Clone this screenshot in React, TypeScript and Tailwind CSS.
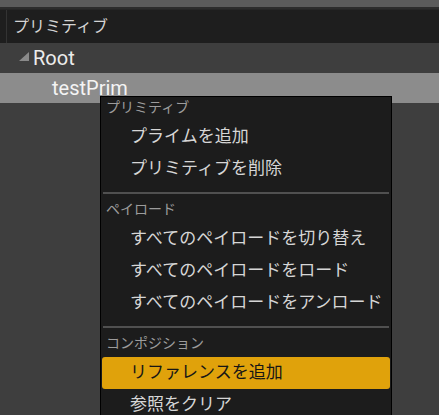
import * as React from "react"

const font = { fontFamily: '"Roboto", "Noto Sans CJK JP", sans-serif' }

type Entry =
  | { kind: "header"; label: string }
  | { kind: "item"; label: string; active?: boolean }
  | { kind: "sep" }

const entries: Entry[] = [
  { kind: "header", label: "プリミティブ" },
  { kind: "item", label: "プライムを追加" },
  { kind: "item", label: "プリミティブを削除" },
  { kind: "sep" },
  { kind: "header", label: "ペイロード" },
  { kind: "item", label: "すべてのペイロードを切り替え" },
  { kind: "item", label: "すべてのペイロードをロード" },
  { kind: "item", label: "すべてのペイロードをアンロード" },
  { kind: "sep" },
  { kind: "header", label: "コンポジション" },
  { kind: "item", label: "リファレンスを追加", active: true },
  { kind: "item", label: "参照をクリア" },
]

function MenuEntry({ entry }: { entry: Entry }) {
  if (entry.kind === "sep") {
    return (
      <div className="h-[16px] flex items-center px-[1px]">
        <div className="h-[2px] w-full bg-[#505050]" />
      </div>
    )
  }
  if (entry.kind === "header") {
    return (
      <div className="h-[22px] pl-[4px] text-[14px] leading-[16px] text-[#9c9c9c]">
        {entry.label}
      </div>
    )
  }
  return (
    <div
      className={
        entry.active
          ? "h-[32px] flex items-center pl-[28px] text-[17px] rounded-[3px] bg-[#e0a20b] text-[#161616]"
          : "h-[32px] flex items-center pl-[28px] text-[17px] text-[#d6d6d6]"
      }
    >
      {entry.label}
    </div>
  )
}

export default function App() {
  return (
    <div className="relative w-[439px] h-[415px] overflow-hidden bg-[#3e3e3e]" style={font}>
      <div className="h-[7px] bg-[#5b5b5b]" />
      <div className="h-[2px] bg-[#2c2c2c]" />
      <div className="h-[34px] flex bg-[#1e1e1e] border-t border-[#262626]">
        <div className="w-[7px] border-r border-[#333333]" />
        <div className="pl-[6px] flex items-center text-[16px] text-[#d4d4d4]">プリミティブ</div>
      </div>
      <div className="h-[30px] flex items-center">
        <svg width="10" height="9" viewBox="0 0 10 9" className="ml-[19px] mt-[-4px]">
          <polygon points="10,0 10,9 0,9" fill="#8a8a8a" />
        </svg>
        <span className="ml-[4px] text-[20px] text-[#ececec]">Root</span>
      </div>
      <div className="h-[30px] flex items-center bg-[#8c8c8c]">
        <span className="ml-[52px] text-[20px] text-[#f4f4f4]">testPrim</span>
      </div>

      <div className="absolute left-[100px] top-[96px] w-[292px] h-[340px] border border-black bg-[#1c1c1c] pt-[2px] px-[1px] flex flex-col">
        {entries.map((e, i) => (
          <MenuEntry key={i} entry={e} />
        ))}
      </div>
    </div>
  )
}
